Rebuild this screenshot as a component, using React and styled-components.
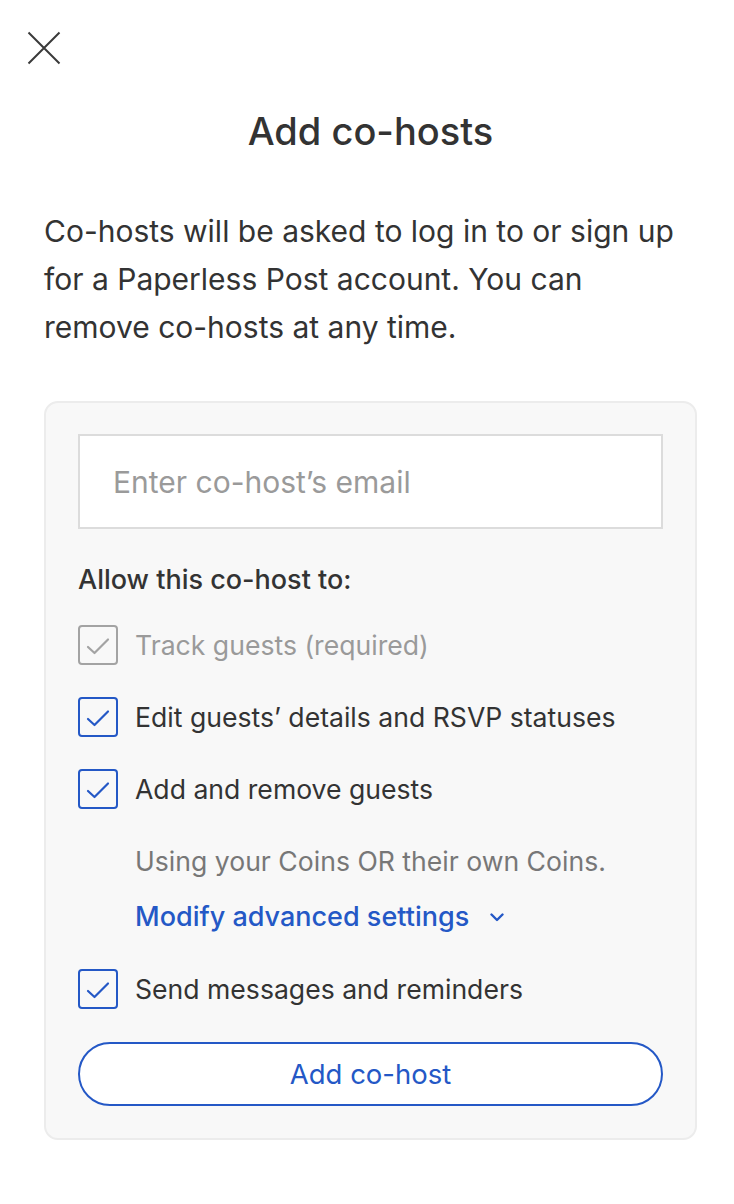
import React from "react";
import styled, { createGlobalStyle } from "styled-components";

const Global = createGlobalStyle`
  html, body { margin: 0; padding: 0; background: #fff; }
  body { font-family: "Inter", "Noto Sans", sans-serif; color: #333; -webkit-font-smoothing: antialiased; }
  * { box-sizing: border-box; }
`;

const Page = styled.div`
  width: 734px;
  min-height: 1204px;
  padding: 0 37px 0 44px;
  display: flex;
  flex-direction: column;
`;

const CloseButton = styled.button`
  margin: 31px 0 0 -17px;
  width: 34px;
  height: 34px;
  padding: 0;
  border: 0;
  background: transparent;
  display: flex;
  align-items: center;
  justify-content: center;
  color: #333;
`;

const Title = styled.h1`
  margin: 44px 0 0;
  text-align: center;
  font-size: 38px;
  font-weight: 500;
  line-height: 44px;
  color: #333;
  letter-spacing: 0;
`;

const Intro = styled.p`
  margin: 54px 0 0;
  max-width: 640px;
  font-size: 30px;
  line-height: 48px;
  color: #333;
`;

const Panel = styled.section`
  margin-top: 50px;
  background: #f8f8f8;
  border: 2px solid #ececec;
  border-radius: 14px;
  padding: 31px 32px 32px;
  display: flex;
  flex-direction: column;
`;

const EmailInput = styled.input`
  width: 100%;
  height: 95px;
  border: 2px solid #dcdcdc;
  background: #fff;
  padding: 0 33px;
  font-family: inherit;
  font-size: 30px;
  color: #333;
  outline: none;
  &::placeholder { color: #9a9a9a; }
`;

const Label = styled.div`
  margin-top: 35px;
  font-size: 27px;
  font-weight: 500;
  line-height: 32px;
  color: #333;
`;

const Options = styled.div`
  margin-top: 29px;
  display: flex;
  flex-direction: column;
  gap: 32px;
`;

const Option = styled.label`
  display: flex;
  align-items: center;
  gap: 17px;
  font-size: 26.6px;
  line-height: 40px;
  color: ${(p) => (p.$disabled ? "#9a9a9a" : "#333")};
`;

const Box = styled.span`
  width: 40px;
  height: 40px;
  flex: none;
  border: 2px solid ${(p) => (p.$disabled ? "#a3a3a3" : "#2458c6")};
  border-radius: 4px;
  display: flex;
  align-items: center;
  justify-content: center;
  color: ${(p) => (p.$disabled ? "#a3a3a3" : "#2458c6")};
  background: transparent;
`;

const SubBlock = styled.div`
  margin-left: 57px;
  display: flex;
  flex-direction: column;
  gap: 16px;
`;

const Note = styled.div`
  font-size: 26.6px;
  line-height: 40px;
  color: #777;
`;

const LinkButton = styled.button`
  align-self: flex-start;
  padding: 0;
  border: 0;
  background: transparent;
  display: flex;
  align-items: center;
  gap: 21px;
  font-family: inherit;
  font-size: 27px;
  font-weight: 500;
  line-height: 40px;
  color: #2458c6;
`;

const AddButton = styled.button`
  margin-top: 33px;
  height: 64px;
  width: 100%;
  border: 2px solid #2458c6;
  border-radius: 32px;
  background: #fff;
  font-family: inherit;
  font-size: 27.5px;
  color: #2458c6;
`;

const Check = () => (
  <svg width="26" height="26" viewBox="0 0 26 26" fill="none">
    <path d="M3 15 L9.5 21 L23 7.5" stroke="currentColor" strokeWidth="2.2" strokeLinecap="round" strokeLinejoin="round" />
  </svg>
);

const CheckRow = ({ disabled, children }) => (
  <Option $disabled={disabled}>
    <Box $disabled={disabled}>
      <Check />
    </Box>
    {children}
  </Option>
);

export default function App() {
  return (
    <>
      <Global />
      <Page>
        <CloseButton aria-label="Close">
          <svg width="34" height="34" viewBox="0 0 34 34" fill="none">
            <path d="M1.5 1.5 L32.5 32.5 M32.5 1.5 L1.5 32.5" stroke="#3a3a3a" strokeWidth="2" />
          </svg>
        </CloseButton>
        <Title>Add co-hosts</Title>
        <Intro>
          Co-hosts will be asked to log in to or sign up for a Paperless Post account. You can remove co-hosts at any time.
        </Intro>
        <Panel>
          <EmailInput placeholder="Enter co-host’s email" />
          <Label>Allow this co-host to:</Label>
          <Options>
            <CheckRow disabled>Track guests (required)</CheckRow>
            <CheckRow>Edit guests’ details and RSVP statuses</CheckRow>
            <CheckRow>Add and remove guests</CheckRow>
            <SubBlock>
              <Note>Using your Coins OR their own Coins.</Note>
              <LinkButton>
                Modify advanced settings
                <svg width="14" height="9" viewBox="0 0 14 9" fill="none">
                  <path d="M1.5 1.5 L7 7 L12.5 1.5" stroke="currentColor" strokeWidth="2.4" strokeLinecap="round" strokeLinejoin="round" />
                </svg>
              </LinkButton>
            </SubBlock>
            <CheckRow>Send messages and reminders</CheckRow>
          </Options>
          <AddButton>Add co-host</AddButton>
        </Panel>
      </Page>
    </>
  );
}
